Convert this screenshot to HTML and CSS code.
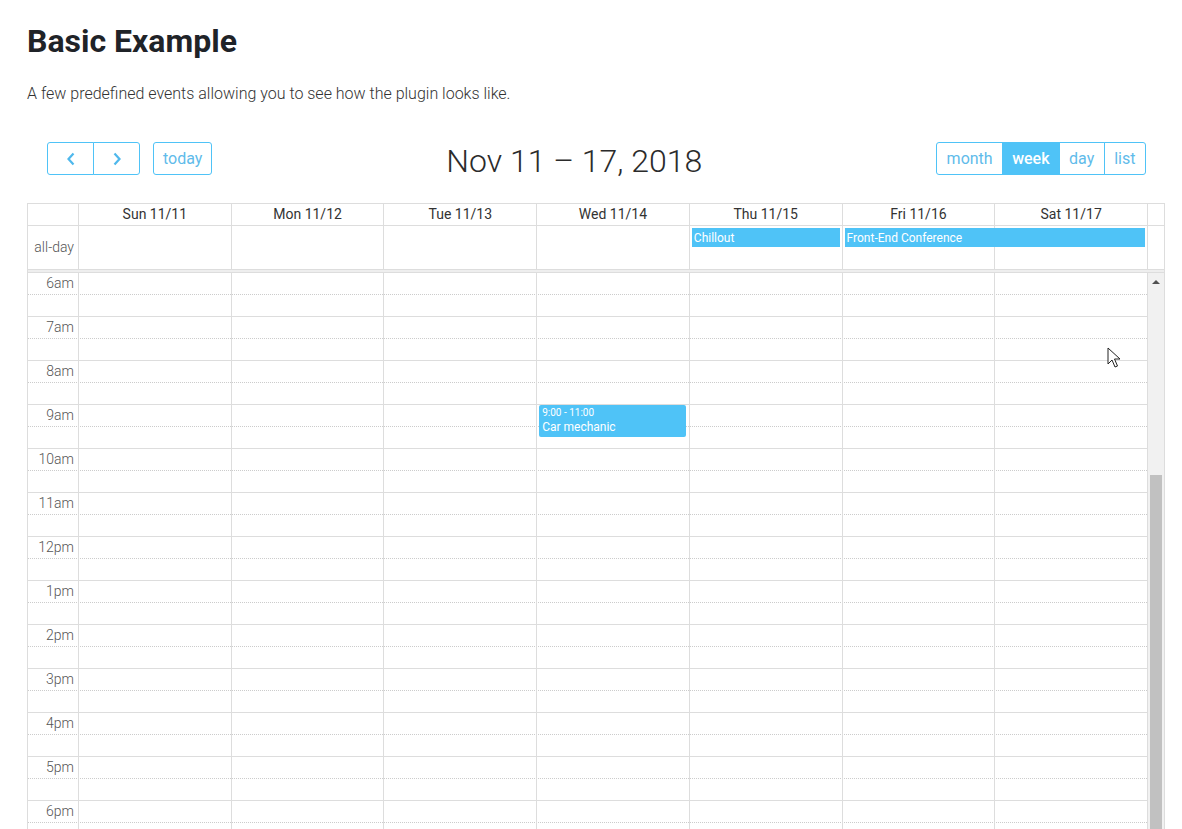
FILE: index.html
```html
<!DOCTYPE html>
<html lang="en">
<head>
  <meta charset="UTF-8">
  <meta name="viewport" content="width=device-width, initial-scale=1.0">
  <title>Basic Example</title>
  <link rel="stylesheet" href="styles.css">
</head>
<body>

<div class="page">
  <h1>Basic Example</h1>
  <p class="lead">A few predefined events allowing you to see how the plugin looks like.</p>

  <div class="fc">
    <div class="fc-toolbar">
      <div class="fc-left">
        <div class="btn-group">
          <button class="btn btn-icon" aria-label="prev">
            <svg width="10" height="14" viewBox="0 0 10 14"><path d="M7.5 1.5 2.5 7l5 5.5" fill="none" stroke="currentColor" stroke-width="2.2"/></svg>
          </button>
          <button class="btn btn-icon" aria-label="next">
            <svg width="10" height="14" viewBox="0 0 10 14"><path d="M2.5 1.5 7.5 7l-5 5.5" fill="none" stroke="currentColor" stroke-width="2.2"/></svg>
          </button>
        </div>
        <button class="btn">today</button>
      </div>
      <h2 class="fc-title">Nov 11 – 17, 2018</h2>
      <div class="btn-group">
        <button class="btn">month</button>
        <button class="btn active">week</button>
        <button class="btn">day</button>
        <button class="btn">list</button>
      </div>
    </div>

    <div class="fc-view">
      <div class="fc-row fc-head">
        <div class="fc-cell fc-axis"></div>
        <div class="fc-cell">Sun 11/11</div>
        <div class="fc-cell">Mon 11/12</div>
        <div class="fc-cell">Tue 11/13</div>
        <div class="fc-cell">Wed 11/14</div>
        <div class="fc-cell">Thu 11/15</div>
        <div class="fc-cell">Fri 11/16</div>
        <div class="fc-cell">Sat 11/17</div>
        <div class="fc-cell"></div>
      </div>

      <div class="fc-allday">
        <div class="fc-row">
          <div class="fc-cell fc-axis">all-day</div>
          <div class="fc-cell"></div>
          <div class="fc-cell"></div>
          <div class="fc-cell"></div>
          <div class="fc-cell"></div>
          <div class="fc-cell"></div>
          <div class="fc-cell"></div>
          <div class="fc-cell"></div>
          <div class="fc-cell"></div>
        </div>
        <div class="fc-row fc-event-row">
          <div class="fc-event" style="grid-column: 6;">Chillout</div>
          <div class="fc-event" style="grid-column: 7 / 9;">Front-End Conference</div>
        </div>
      </div>

      <div class="fc-divider"></div>

      <div class="fc-time-body">
        <div class="fc-time-grid">
          <div class="fc-slots">
            <div class="fc-slot"><span class="fc-axis">6am</span></div>
            <div class="fc-slot minor"></div>
            <div class="fc-slot"><span class="fc-axis">7am</span></div>
            <div class="fc-slot minor"></div>
            <div class="fc-slot"><span class="fc-axis">8am</span></div>
            <div class="fc-slot minor"></div>
            <div class="fc-slot"><span class="fc-axis">9am</span></div>
            <div class="fc-slot minor"></div>
            <div class="fc-slot"><span class="fc-axis">10am</span></div>
            <div class="fc-slot minor"></div>
            <div class="fc-slot"><span class="fc-axis">11am</span></div>
            <div class="fc-slot minor"></div>
            <div class="fc-slot"><span class="fc-axis">12pm</span></div>
            <div class="fc-slot minor"></div>
            <div class="fc-slot"><span class="fc-axis">1pm</span></div>
            <div class="fc-slot minor"></div>
            <div class="fc-slot"><span class="fc-axis">2pm</span></div>
            <div class="fc-slot minor"></div>
            <div class="fc-slot"><span class="fc-axis">3pm</span></div>
            <div class="fc-slot minor"></div>
            <div class="fc-slot"><span class="fc-axis">4pm</span></div>
            <div class="fc-slot minor"></div>
            <div class="fc-slot"><span class="fc-axis">5pm</span></div>
            <div class="fc-slot minor"></div>
            <div class="fc-slot"><span class="fc-axis">6pm</span></div>
            <div class="fc-slot minor"></div>
          </div>

          <div class="fc-cols">
            <div></div>
            <div class="fc-col"></div>
            <div class="fc-col"></div>
            <div class="fc-col"></div>
            <div class="fc-col">
              <!-- 9:00 starts three hours after the 6am row -->
              <div class="fc-time-event" style="margin-top: 132px;">
                <div class="fc-time">9:00 - 11:00</div>
                <div class="fc-event-title">Car mechanic</div>
              </div>
            </div>
            <div class="fc-col"></div>
            <div class="fc-col"></div>
            <div class="fc-col"></div>
          </div>
        </div>

        <div class="fc-scrollbar">
          <div class="scroll-arrow"></div>
          <div class="scroll-thumb"></div>
        </div>
      </div>
    </div>
  </div>
</div>

<svg class="cursor" width="14" height="22" viewBox="0 0 14 22">
  <path d="M1 1v16l4-4 3 7 2.5-1-3-7h5.5z" fill="#fff" stroke="#222" stroke-width="1"/>
</svg>

</body>
</html>
```

FILE: styles.css
```css
html, body {
  margin: 0;
  height: 100%;
  overflow: hidden;
}
body {
  font-family: Roboto, "Noto Sans", Arial, sans-serif;
  color: #212529;
  background: #fff;
}
.page {
  padding-left: 27px;
  width: 1138px;
}
h1 {
  font-size: 32px;
  font-weight: 700;
  line-height: 1.2;
  margin: 22px 0 0;
  color: #1f2328;
}
.lead {
  font-size: 16px;
  font-weight: 300;
  line-height: 24px;
  margin: 22px 0 0;
  color: #333;
}

/* toolbar */
.fc-toolbar {
  display: flex;
  justify-content: space-between;
  align-items: center;
  margin-top: 36px;
  padding: 0 19px 0 20px;
  height: 33px;
}
.fc-left {
  display: flex;
  gap: 13px;
}
.fc-title {
  margin: 6px 0 0;
  font-size: 32px;
  font-weight: 300;
  color: #2b2b2b;
  line-height: 33px;
}
.btn-group {
  display: flex;
}
.btn {
  font-family: inherit;
  font-size: 16px;
  height: 33px;
  padding: 0 9.5px;
  background: #fff;
  color: #5fbbea;
  border: 1px solid #4fc3f7;
  border-radius: 3px;
  cursor: pointer;
}
.fc-left > .btn {
  padding: 0 9px;
}
.btn-group .btn {
  border-radius: 0;
}
.btn-group .btn + .btn {
  margin-left: -1px;
}
.btn-group .btn:first-child {
  border-radius: 3px 0 0 3px;
}
.btn-group .btn:last-child {
  border-radius: 0 3px 3px 0;
}
.btn-icon {
  width: 47px;
  display: flex;
  align-items: center;
  justify-content: center;
  color: #4fb8ec;
}
.btn.active {
  background: #4fc3f7;
  color: #fff;
  font-weight: 500;
  padding: 0 9px;
}

/* grid */
.fc-view {
  margin-top: 28px;
}
.fc-row {
  display: grid;
  grid-template-columns: 51px repeat(7, 1fr) 17px;
}
.fc-head {
  border-top: 1px solid #ddd;
  border-left: 1px solid #ddd;
}
.fc-cell {
  border-right: 1px solid #ddd;
  border-bottom: 1px solid #ddd;
}
.fc-head .fc-cell {
  height: 22px;
  box-sizing: border-box;
  text-align: center;
  font-size: 14px;
  line-height: 21px;
  color: #333;
}
.fc-allday {
  display: grid;
  border-left: 1px solid #ddd;
}
.fc-allday > .fc-row {
  grid-area: 1 / 1;
}
.fc-allday .fc-cell {
  height: 44px;
  box-sizing: border-box;
}
.fc-axis {
  font-size: 14px;
  font-weight: 300;
  color: #555;
  text-align: right;
  padding-right: 4px;
}
.fc-allday .fc-axis {
  line-height: 43px;
}
.fc-event-row {
  align-items: start;
  padding-top: 2px;
}
.fc-event {
  height: 19px;
  margin: 0 3px 0 2px;
  background: #4fc3f7;
  color: #fff;
  font-size: 12px;
  line-height: 20px;
  padding-left: 2px;
  white-space: nowrap;
  overflow: hidden;
}
.fc-divider {
  height: 2px;
  background: #eee;
  border-left: 1px solid #ddd;
  border-right: 1px solid #ddd;
}

/* time grid */
.fc-time-body {
  display: grid;
  grid-template-columns: 1fr 17px;
  border-left: 1px solid #ddd;
  border-right: 1px solid #ddd;
  border-top: 1px solid #ddd;
}
.fc-time-grid {
  display: grid;
}
.fc-slots,
.fc-cols {
  grid-area: 1 / 1;
}
.fc-slot {
  height: 22px;
  box-sizing: border-box;
  border-bottom: 1px dotted #ccc;
  display: flex;
  align-items: center;
}
.fc-slot.minor {
  border-bottom: 1px solid #ddd;
}
.fc-slot .fc-axis {
  width: 50px;
  box-sizing: border-box;
  line-height: 21px;
}
.fc-cols {
  display: grid;
  grid-template-columns: 50px repeat(7, 1fr);
}
.fc-col {
  border-left: 1px solid #ddd;
}
.fc-time-event {
  height: 32px;
  margin-left: 2px;
  margin-right: 3px;
  background: #4fc3f7;
  color: #fff;
  padding: 1px 3px;
  box-sizing: border-box;
  border-radius: 2px;
}
.fc-time {
  font-size: 10px;
  line-height: 13px;
}
.fc-event-title {
  font-size: 12px;
  line-height: 16px;
}

/* scrollbar */
.fc-scrollbar {
  border-left: 1px solid #ddd;
  background: #f1f1f1;
  display: flex;
  flex-direction: column;
  align-items: center;
}
.scroll-arrow {
  margin-top: 7px;
  width: 0;
  height: 0;
  border-left: 4px solid transparent;
  border-right: 4px solid transparent;
  border-bottom: 4px solid #505050;
}
.scroll-thumb {
  margin-top: 191px;
  width: 12px;
  height: 600px;
  background: #c1c1c1;
}

.cursor {
  position: absolute;
  left: 1107px;
  top: 347px;
}
```
